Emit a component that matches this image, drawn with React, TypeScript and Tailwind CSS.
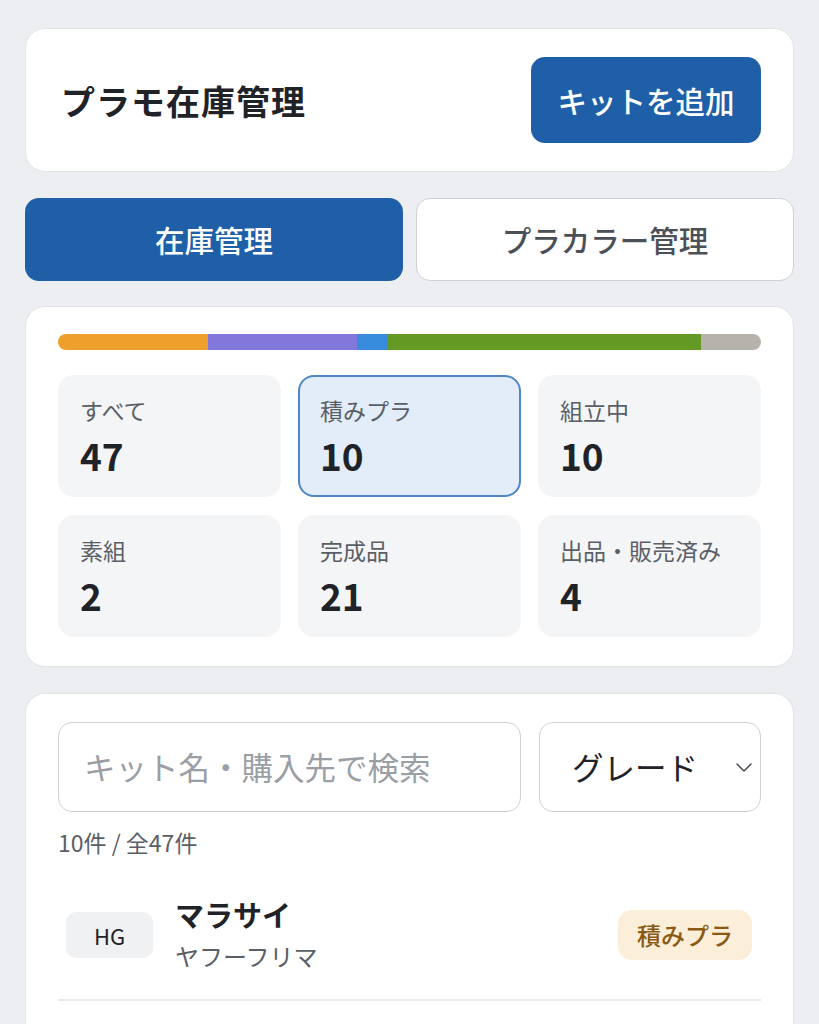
import React from "react";

const font = { fontFamily: '"Noto Sans CJK JP", "Noto Sans", sans-serif' };

const stats = [
  { label: "すべて", value: "47" },
  { label: "積みプラ", value: "10", active: true },
  { label: "組立中", value: "10" },
  { label: "素組", value: "2" },
  { label: "完成品", value: "21" },
  { label: "出品・販売済み", value: "4" },
];

export default function App() {
  return (
    <div
      className="min-h-screen bg-[#eceef1] px-[25px] pt-[28px] flex flex-col"
      style={font}
    >
      {/* Header */}
      <div className="h-[144px] rounded-[20px] border border-[#e2e4e8] bg-white pl-[35px] pr-[32px] flex items-center justify-between">
        <h1 className="text-[34px] font-bold text-[#1f2328] tracking-[1px]">プラモ在庫管理</h1>
        <button className="w-[230px] h-[86px] rounded-[14px] bg-[#1f5fa8] text-white text-[29.5px] font-medium">
          キットを追加
        </button>
      </div>

      {/* Tabs */}
      <div className="mt-[26px] grid grid-cols-2 gap-[13px]">
        <button className="h-[83px] rounded-[14px] bg-[#1f5fa8] text-white text-[29.5px] font-medium">
          在庫管理
        </button>
        <button className="h-[83px] rounded-[14px] bg-white border border-[#cdd1d6] text-[#4b5058] text-[29.5px] font-medium">
          プラカラー管理
        </button>
      </div>

      {/* Stats */}
      <div className="mt-[25px] rounded-[20px] border border-[#e2e4e8] bg-white px-[32px] pt-[27px] pb-[29px]">
        <div className="h-[16px] rounded-full overflow-hidden flex">
          <div className="bg-[#efa02c]" style={{ width: `${(10 / 47) * 100}%` }} />
          <div className="bg-[#8278dc]" style={{ width: `${(10 / 47) * 100}%` }} />
          <div className="bg-[#368bdc]" style={{ width: `${(2 / 47) * 100}%` }} />
          <div className="bg-[#649a24]" style={{ width: `${(21 / 47) * 100}%` }} />
          <div className="bg-[#b6b3ac]" style={{ width: `${(4 / 47) * 100}%` }} />
        </div>
        <div className="mt-[25px] grid grid-cols-3 gap-x-[17px] gap-y-[18px]">
          {stats.map((s) => (
            <div
              key={s.label}
              className={
                s.active
                  ? "h-[122px] rounded-[16px] bg-[#e3edf9] border-2 border-[#4f86c6] pl-[20px] pt-[18px]"
                  : "h-[122px] rounded-[16px] bg-[#f4f5f7] pl-[22px] pt-[20px]"
              }
            >
              <div className="text-[23px] leading-[30px] text-[#5a5f67]">{s.label}</div>
              <div className="mt-[7px] text-[37px] leading-[46px] font-bold text-[#1f2328]">{s.value}</div>
            </div>
          ))}
        </div>
      </div>

      {/* List */}
      <div className="mt-[26px] flex-1 rounded-t-[20px] border border-b-0 border-[#e2e4e8] bg-white px-[32px] pt-[28px]">
        <div className="flex gap-[18px]">
          <div className="flex-1 h-[90px] rounded-[14px] border border-[#cdd1d6] flex items-center pl-[25px]">
            <span className="text-[31.5px] text-[#9a9ea5]">キット名・購入先で検索</span>
          </div>
          <div className="w-[222px] h-[90px] rounded-[14px] border border-[#cdd1d6] flex items-center pl-[32px] pr-[6px] justify-between">
            <span className="text-[31.5px] text-[#1f2328]">グレード</span>
            <svg width="20" height="20" viewBox="0 0 20 20" fill="none" stroke="#4b5058" strokeWidth="1.6" strokeLinecap="round" strokeLinejoin="round">
              <path d="M3 7l7 7 7-7" />
            </svg>
          </div>
        </div>
        <div className="mt-[15px] text-[23px] leading-[30px] text-[#5a5f67]">10件 / 全47件</div>
        <div className="mt-[36px] pb-[22px] border-b-2 border-[#e8eaed] flex items-center pl-[8px] pr-[9px]">
          <div className="w-[87px] h-[46px] rounded-[10px] bg-[#f0f1f3] flex items-center justify-center text-[22px] text-[#1f2328]">
            HG
          </div>
          <div className="ml-[22px] flex-1">
            <div className="text-[29px] leading-[42px] font-bold text-[#1f2328]">マラサイ</div>
            <div className="text-[24px] leading-[42px] text-[#5a5f67]">ヤフーフリマ</div>
          </div>
          <div className="w-[134px] h-[50px] rounded-[14px] bg-[#fcefd9] flex items-center justify-center text-[24px] font-medium text-[#8a5a14]">
            積みプラ
          </div>
        </div>
      </div>
    </div>
  );
}
